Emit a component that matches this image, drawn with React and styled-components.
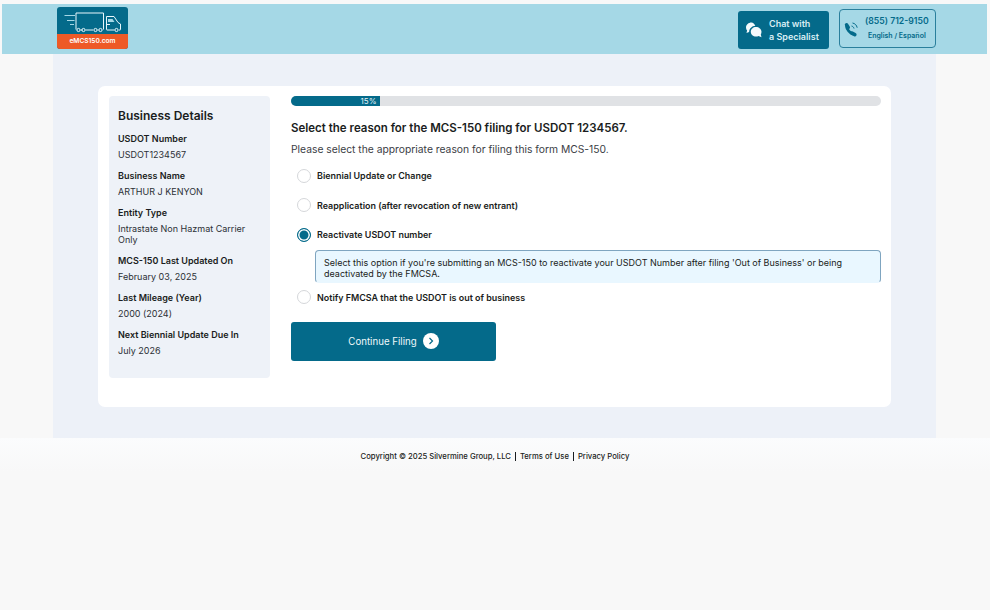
import React from 'react'
import styled, { createGlobalStyle } from 'styled-components'

const Global = createGlobalStyle`
  html, body { margin: 0; padding: 0; background: #f8f8f8; }
  body { font-family: Inter, "Liberation Sans", sans-serif; color: #1a1d21; }
`

const Page = styled.div`
  min-height: 610px;
  padding-top: 4px;
  box-sizing: border-box;
`

const Header = styled.header`
  height: 50px;
  margin: 0 3px 0 2px;
  padding: 0 51px 0 55px;
  background: #a5d8e6;
  display: flex;
  align-items: center;
  justify-content: space-between;
`

const Logo = styled.div`
  width: 71px;
  height: 42px;
  border-radius: 3px;
  overflow: hidden;
  background: #046a8a;
  display: flex;
  flex-direction: column;
  margin-top: -2px;
`

const LogoTop = styled.div`
  flex: 1;
  display: flex;
  align-items: center;
  justify-content: center;
`

const LogoBottom = styled.div`
  height: 15px;
  background: #ee5a26;
  color: #fff;
  font-size: 6.6px;
  font-weight: 600;
  text-align: center;
  line-height: 15px;
`

const Actions = styled.div`
  display: flex;
  align-items: center;
  gap: 10px;
`

const ChatButton = styled.div`
  width: 91px;
  height: 38px;
  margin-top: 1px;
  background: #046a8a;
  border-radius: 3px;
  color: #d9eef5;
  font-size: 9px;
  font-weight: 600;
  line-height: 13px;
  display: flex;
  align-items: center;
  gap: 6px;
  padding-left: 7px;
  box-sizing: border-box;
`

const PhoneBox = styled.div`
  width: 97px;
  height: 39px;
  margin-top: -1px;
  border: 1px solid #2a7f9c;
  border-radius: 4px;
  color: #046a8a;
  font-weight: 600;
  display: flex;
  align-items: center;
  gap: 5px;
  padding-left: 4px;
  box-sizing: border-box;
`

const PhoneText = styled.div`
  display: flex;
  flex-direction: column;
  align-items: center;
  gap: 4px;
`

const PhoneNumber = styled.span`
  font-size: 8.7px;
  line-height: 11px;
`

const PhoneLang = styled.span`
  font-size: 7px;
  line-height: 10px;
`

const Main = styled.main`
  width: 883px;
  height: 384px;
  margin-left: 53px;
  padding: 32px 45px 0;
  box-sizing: border-box;
  background: #edf1f8;
`

const Card = styled.div`
  height: 321px;
  padding: 10px;
  box-sizing: border-box;
  background: #fff;
  border-radius: 7px;
  display: flex;
  gap: 21px;
`

const Sidebar = styled.aside`
  width: 161px;
  height: 282px;
  flex-shrink: 0;
  margin-left: 1px;
  padding: 13px 9px;
  box-sizing: border-box;
  background: #eef2f8;
  border-radius: 4px;
`

const SideTitle = styled.h2`
  margin: 0 0 10px;
  font-size: 12px;
  line-height: 14px;
  font-weight: 600;
`

const Field = styled.div`
  margin-bottom: 10px;
`

const FieldLabel = styled.div`
  font-size: 9px;
  line-height: 12px;
  font-weight: 600;
  margin-bottom: 4px;
`

const FieldValue = styled.div`
  font-size: 9px;
  line-height: 11px;
  color: #2c3036;
`

const Content = styled.section`
  flex: 1;
  min-width: 0;
`

const Progress = styled.div`
  height: 10px;
  background: #e0e2e5;
  border-radius: 5px;
  overflow: hidden;
`

const ProgressFill = styled.div`
  height: 100%;
  background: #046a8a;
  color: #e6f3f7;
  font-size: 8px;
  line-height: 10px;
  text-align: right;
  padding-right: 3px;
  box-sizing: border-box;
`

const Title = styled.h1`
  margin: 15px 0 0;
  font-size: 11.5px;
  line-height: 14px;
  font-weight: 600;
`

const Subtitle = styled.p`
  margin: 7px 0 5px;
  font-size: 10.3px;
  line-height: 14px;
  color: #3b4045;
`

const Option = styled.div`
  height: 29.5px;
  display: flex;
  align-items: center;
  gap: 6px;
  padding-left: 6px;
  font-size: 8.95px;
  font-weight: 600;
`

const Radio = styled.span`
  width: 14px;
  height: 14px;
  border-radius: 50%;
  box-sizing: border-box;
  flex-shrink: 0;
  background: ${p => (p.$checked ? '#046a8a' : '#fff')};
  border: 1px solid ${p => (p.$checked ? '#046a8a' : '#d5d7da')};
  box-shadow: ${p => (p.$checked ? 'inset 0 0 0 1.5px #fff' : 'none')};
`

const Note = styled.div`
  margin: 0 0 0 24px;
  height: 33px;
  padding: 6px 8px;
  box-sizing: border-box;
  font-size: 9px;
  line-height: 11px;
  background: #e9f7ff;
  border: 1px solid #7fa5c0;
  border-bottom-color: transparent;
  border-radius: 4px;
`

const ContinueButton = styled.button`
  width: 205px;
  height: 39px;
  margin-top: 9.5px;
  border: 0;
  border-radius: 3px;
  background: #046a8a;
  color: #eef8fb;
  font-family: inherit;
  font-size: 9.7px;
  display: flex;
  align-items: center;
  justify-content: center;
  gap: 6px;
`

const ArrowDot = styled.span`
  width: 16px;
  height: 16px;
  border-radius: 50%;
  background: #fff;
  display: flex;
  align-items: center;
  justify-content: center;
`

const Footer = styled.footer`
  height: 32px;
  padding-top: 2px;
  background: linear-gradient(#fbfcfd, #f8f8f8);
  display: flex;
  align-items: center;
  justify-content: center;
  font-size: 7.7px;
  font-weight: 500;
  color: #1a1d21;
`

const Sep = styled.span`
  width: 1px;
  height: 9px;
  margin: 0 4px;
  background: #1a1d21;
`

const fields = [
  ['USDOT Number', 'USDOT1234567'],
  ['Business Name', 'ARTHUR J KENYON'],
  ['Entity Type', 'Intrastate Non Hazmat Carrier Only'],
  ['MCS-150 Last Updated On', 'February 03, 2025'],
  ['Last Mileage (Year)', '2000 (2024)'],
  ['Next Biennial Update Due In', 'July 2026'],
]

function TruckLogo() {
  return (
    <svg width="58" height="24" viewBox="0 0 58 24" fill="none" stroke="#e8f6fb" strokeWidth="1">
      <path d="M.5 6.500H11M3 11.500h7.500M6 15.500h4" stroke="#a5d8e6" />
      <path d="M12 4h27.500v16.500M12 4v16.500M16.500 21h2M21.500 21h7.500M33.500 21h1" />
      <circle cx="14.500" cy="21" r="1.600" />
      <circle cx="19.500" cy="21" r="1.600" />
      <circle cx="31.500" cy="21" r="1.600" />
      <circle cx="36.500" cy="21" r="1.600" />
      <path d="M50.500 21h-7.500a.5.5 0 0 1-.5-.5V7.500H50l4 6 2.500 1.500v5.500a.5.5 0 0 1-.5.500h-1" />
      <path d="M44 10h4.500l2 3H44z" fill="#a5d8e6" stroke="none" />
      <path d="M42.500 15.500H46" />
      <circle cx="52.500" cy="21" r="1.600" />
    </svg>
  )
}

function ChatIcon() {
  return (
    <svg width="18" height="18" viewBox="0 0 18 18" fill="#f4fafc">
      <path d="M6.500 1.500C3.500 1.500 1 3.700 1 6.500c0 1.200.4 2.200 1.100 3L1.500 12l2.600-1.100C4.300 7.600 6.800 5 10.300 4.800 9.500 2.900 8.100 1.500 6.500 1.500z" />
      <path d="M11 6c-2.900 0-5.200 2.100-5.200 4.800s2.300 4.800 5.200 4.800c.9 0 1.800-.2 2.500-.6l3 1.200-.7-2.800c.4-.7.700-1.600.7-2.600C16.500 8.100 13.900 6 11 6z" />
    </svg>
  )
}

function PhoneIcon() {
  return (
    <svg width="16" height="18" viewBox="0 0 16 18" fill="none" stroke="#046a8a">
      <path d="M2.500 6c.4 3.300 3.300 6.800 6.500 8" strokeWidth="3" />
      <path d="M2.600 4.800 4.200 7.500M8 13.200l2.800 1.400" strokeWidth="3.600" strokeLinecap="round" />
      <path d="M7.500 6c1.300.3 2.200 1.200 2.500 2.500M8.500 3c2.400.4 4.200 2.200 4.700 4.700" strokeWidth="1" />
    </svg>
  )
}

export default function App() {
  return (
    <Page>
      <Global />
      <Header>
        <Logo>
          <LogoTop><TruckLogo /></LogoTop>
          <LogoBottom>eMCS150.com</LogoBottom>
        </Logo>
        <Actions>
          <ChatButton>
            <ChatIcon />
            <span>Chat with<br />a Specialist</span>
          </ChatButton>
          <PhoneBox>
            <PhoneIcon />
            <PhoneText>
              <PhoneNumber>(855) 712-9150</PhoneNumber>
              <PhoneLang>English / Español</PhoneLang>
            </PhoneText>
          </PhoneBox>
        </Actions>
      </Header>
      <Main>
        <Card>
          <Sidebar>
            <SideTitle>Business Details</SideTitle>
            {fields.map(([label, value]) => (
              <Field key={label}>
                <FieldLabel>{label}</FieldLabel>
                <FieldValue>{value}</FieldValue>
              </Field>
            ))}
          </Sidebar>
          <Content>
            <Progress>
              <ProgressFill style={{ width: '15%' }}>15%</ProgressFill>
            </Progress>
            <Title>Select the reason for the MCS-150 filing for USDOT 1234567.</Title>
            <Subtitle>Please select the appropriate reason for filing this form MCS-150.</Subtitle>
            <Option><Radio />Biennial Update or Change</Option>
            <Option><Radio />Reapplication (after revocation of new entrant)</Option>
            <Option><Radio $checked />Reactivate USDOT number</Option>
            <Note>Select this option if you're submitting an MCS-150 to reactivate your USDOT Number after filing 'Out of Business' or being deactivated by the FMCSA.</Note>
            <Option>
              <Radio />Notify FMCSA that the USDOT is out of business
            </Option>
            <ContinueButton>
              Continue Filing
              <ArrowDot>
                <svg width="8" height="8" viewBox="0 0 8 8" fill="none" stroke="#046a8a" strokeWidth="1.200">
                  <path d="M2.500 1 5.500 4 2.500 7" />
                </svg>
              </ArrowDot>
            </ContinueButton>
          </Content>
        </Card>
      </Main>
      <Footer>
        Copyright © 2025 Silvermine Group, LLC<Sep />Terms of Use<Sep />Privacy Policy
      </Footer>
    </Page>
  )
}
